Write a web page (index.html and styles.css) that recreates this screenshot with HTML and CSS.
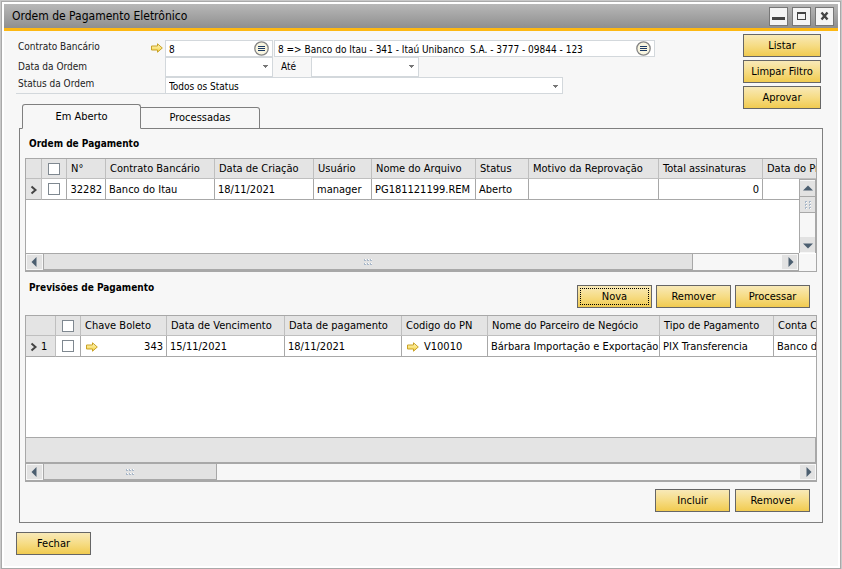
FILE: index.html
```html
<!DOCTYPE html>
<html lang="pt-BR">
<head>
<meta charset="utf-8">
<title>Ordem de Pagamento Eletrônico</title>
<link rel="stylesheet" href="styles.css">
</head>
<body>
<svg class="defs" aria-hidden="true">
  <defs>
    <linearGradient id="gold" x1="0" y1="0" x2="0" y2="1"><stop offset="0" stop-color="#fffbc8"/><stop offset="1" stop-color="#f5cf3c"/></linearGradient>
    <symbol id="arrow" viewBox="0 0 12 10"><path d="M.5 3h6V.8L11.3 5 6.500 9.200V7H.5z" fill="url(#gold)" stroke="#c9a227"/></symbol>
    <symbol id="picker" viewBox="0 0 15 15"><circle cx="7.500" cy="7.500" r="6.700" fill="#f8f5e0" stroke="#858585" stroke-width="1.300"/><path d="M4 5.500h7M4 7.500h7M4 9.500h7" stroke="#1d3b66"/></symbol>
    <symbol id="chevron" viewBox="0 0 8 10"><path d="M1.500 1.500 5.500 5l-4 3.500" fill="none" stroke="#444" stroke-width="2"/></symbol>
    <symbol id="tri" viewBox="0 0 10 10"><path d="M6.500 0v10L1.500 5z" fill="#4c5f70"/></symbol>
    <symbol id="grip" viewBox="0 0 8 6"><path d="M0 0h2v2H0zM3 0h2v2H3zM6 0h2v2H6zM0 4h2v2H0zM3 4h2v2H3zM6 4h2v2H6z" fill="#fff"/><path d="M0 0h1v2H0zM0 1h2v1H0zM3 0h1v2H3zM3 1h2v1H3zM6 0h1v2H6zM6 1h2v1H6zM0 4h1v2H0zM0 5h2v1H0zM3 4h1v2H3zM3 5h2v1H3zM6 4h1v2H6zM6 5h2v1H6z" fill="#a9b8c9"/></symbol>
  </defs>
</svg>
<main class="window">
  <header class="titlebar">
    <h1>Ordem de Pagamento Eletrônico</h1>
    <button class="winbtn" aria-label="Minimizar"><svg width="17" height="17"><path d="M2 9h13v3H2z" fill="#444"/></svg></button>
    <button class="winbtn" aria-label="Maximizar"><svg width="17" height="17"><path d="M4 4h9v8H4z M5 6v5h7V6z" fill="#444" fill-rule="evenodd"/></svg></button>
    <button class="winbtn" aria-label="Fechar janela"><svg width="17" height="17"><path d="M5.500 4.500l6 7M11.500 4.500l-6 7" stroke="#444" stroke-width="2.400"/></svg></button>
  </header>
  <div class="content">
    <section class="top">
      <form class="filters">
        <div class="labels">
          <label for="contract">Contrato Bancário</label>
          <svg class="link" width="12" height="10"><use href="#arrow"/></svg>
          <label for="date-from">Data da Ordem</label>
          <label for="status">Status da Ordem</label>
        </div>
        <div class="fields">
          <div class="line">
            <div class="field short"><input id="contract" value="8"><button type="button" class="pick" aria-label="Escolher contrato"><svg width="15" height="15"><use href="#picker"/></svg></button></div>
            <div class="field long"><input aria-label="Descrição do contrato" value="8 =&gt; Banco do Itau - 341 - Itaú Unibanco  S.A. - 3777 - 09844 - 123"><button type="button" class="pick" aria-label="Escolher conta"><svg width="15" height="15"><use href="#picker"/></svg></button></div>
          </div>
          <div class="line dates">
            <select id="date-from" class="short"><option></option></select>
            <label class="until" for="date-to">Até</label>
            <select id="date-to" class="short"><option></option></select>
          </div>
          <div class="line"><select id="status" class="status"><option>Todos os Status</option></select></div>
        </div>
      </form>
      <div class="actions">
        <button class="btn">Listar</button>
        <button class="btn">Limpar Filtro</button>
        <button class="btn">Aprovar</button>
      </div>
    </section>

    <nav class="tabs" role="tablist">
      <button class="tab active" role="tab" aria-selected="true">Em Aberto</button>
      <button class="tab" role="tab" aria-selected="false">Processadas</button>
    </nav>

    <section class="panel">
      <h2>Ordem de Pagamento</h2>
      <div class="grid orders">
        <div class="view">
          <table>
            <colgroup><col class="w16"><col class="w25"><col class="w39"><col class="w109"><col class="w99"><col class="w58"><col class="w104"><col class="w53"><col class="w130"><col class="w104"><col></colgroup>
            <thead><tr><th></th><th class="check"><input type="checkbox" aria-label="Selecionar todas as ordens"></th><th>N°</th><th>Contrato Bancário</th><th>Data de Criação</th><th>Usuário</th><th>Nome do Arquivo</th><th>Status</th><th>Motivo da Reprovação</th><th>Total assinaturas</th><th>Data do Pr</th></tr></thead>
            <tbody><tr><td class="rowhead"><svg width="8" height="10"><use href="#chevron"/></svg></td><td class="check"><input type="checkbox" aria-label="Selecionar ordem 32282"></td><td class="num">32282</td><td>Banco do Itau</td><td>18/11/2021</td><td>manager</td><td>PG181121199.REM</td><td>Aberto</td><td></td><td class="num">0</td><td></td></tr></tbody>
          </table>
          <div class="vbar">
            <button class="arrow up" aria-label="Rolar para cima"><svg width="10" height="10"><use href="#tri"/></svg></button>
            <div class="vthumb"><svg width="8" height="6"><use href="#grip"/></svg></div>
            <button class="arrow down" aria-label="Rolar para baixo"><svg width="10" height="10"><use href="#tri"/></svg></button>
          </div>
        </div>
        <div class="hbar">
          <button class="arrow" aria-label="Rolar para a esquerda"><svg width="10" height="10"><use href="#tri"/></svg></button>
          <div class="track"><div class="thumb wide"><svg width="8" height="6"><use href="#grip"/></svg></div></div>
          <button class="arrow right" aria-label="Rolar para a direita"><svg width="10" height="10"><use href="#tri"/></svg></button>
        </div>
      </div>

      <div class="sub">
        <h2>Previsões de Pagamento</h2>
        <div class="buttons close-set">
          <button class="btn focused">Nova</button>
          <button class="btn">Remover</button>
          <button class="btn">Processar</button>
        </div>
      </div>
      <div class="grid forecasts">
        <div class="view">
          <table>
            <colgroup><col class="w30"><col class="w25"><col class="w86"><col class="w118"><col class="w117"><col class="w86"><col class="w172"><col class="w114"><col></colgroup>
            <thead><tr><th></th><th class="check"><input type="checkbox" aria-label="Selecionar todas as previsões"></th><th>Chave Boleto</th><th>Data de Vencimento</th><th>Data de pagamento</th><th>Codigo do PN</th><th>Nome do Parceiro de Negócio</th><th>Tipo de Pagamento</th><th>Conta C</th></tr></thead>
            <tbody><tr><td class="rowhead"><div class="cell"><svg width="8" height="10"><use href="#chevron"/></svg>1</div></td><td class="check"><input type="checkbox" aria-label="Selecionar previsão 1"></td><td><div class="cell spread"><svg width="12" height="10"><use href="#arrow"/></svg>343</div></td><td>15/11/2021</td><td>18/11/2021</td><td><div class="cell linked"><svg width="12" height="10"><use href="#arrow"/></svg>V10010</div></td><td>Bárbara Importação e Exportação</td><td>PIX Transferencia</td><td>Banco d</td></tr></tbody>
          </table>
        </div>
        <div class="totals"></div>
        <div class="hbar">
          <button class="arrow" aria-label="Rolar para a esquerda"><svg width="10" height="10"><use href="#tri"/></svg></button>
          <div class="track"><div class="thumb"><svg width="8" height="6"><use href="#grip"/></svg></div></div>
          <button class="arrow right" aria-label="Rolar para a direita"><svg width="10" height="10"><use href="#tri"/></svg></button>
        </div>
      </div>
      <div class="buttons foot">
        <button class="btn">Incluir</button>
        <button class="btn">Remover</button>
      </div>
    </section>
    <button class="btn close">Fechar</button>
  </div>
</main>
</body>
</html>
```
FILE: styles.css
```css
* { box-sizing: border-box; }
body {
  margin: 0;
  padding: 1px;
  background: #c8c8c8;
  color: #000;
  font: 11px/14px "DejaVu Sans Condensed", "Noto Sans", sans-serif;
}
button, input, select { font: inherit; color: inherit; margin: 0; }
svg { display: block; flex: none; }
.defs { position: absolute; width: 0; height: 0; }
h1, h2 { margin: 0; }

.window {
  display: flex;
  flex-direction: column;
  min-height: calc(100vh - 1px);
  border: 1px solid #a9a9a9;
  outline: 2px solid #fff;
  outline-offset: -3px;
  padding: 2px;
  background: #f7f7f7;
}
.titlebar {
  display: flex;
  align-items: center;
  gap: 4px;
  height: 27px;
  padding: 0 4px 0 8px;
  background: linear-gradient(#b8b8b8, #8f8f8f);
  border-bottom: 3px solid #fdb813;
}
.titlebar h1 { flex: 1; font-size: 12px; font-weight: normal; }
.winbtn {
  width: 19px;
  height: 19px;
  padding: 0;
  border: 1px solid #777;
  background: #f4f4f4;
}
.content {
  flex: 1;
  display: flex;
  flex-direction: column;
  padding: 0 15px 11px;
}

.top { display: flex; justify-content: space-between; padding: 3px 2px 0 0; }
.filters { display: flex; flex: 1; font-size: 10px; padding-top: 6px; margin-left: -3px; }
.labels {
  display: grid;
  grid-template-columns: 1fr 12px;
  grid-template-rows: 20px 17px 17px;
  width: 149px;
  height: 54px;
  padding: 0 2px;
  border-bottom: 1px solid #d3d8dc;
  color: #222;
}
.labels label { grid-column: 1; }
.link { margin-top: 3px; }
.line { display: flex; }
.field { position: relative; margin-right: 1px; }
.field input, select {
  display: block;
  width: 100%;
  height: 17px;
  padding: 2px 3px 0;
  border: 1px solid #d3d8dc;
  border-radius: 0;
  background: #fff;
  outline: 0;
}
.short { width: 108px; }
.long { width: 381px; }
.pick {
  position: absolute;
  right: 4px;
  top: 1px;
  padding: 0;
  border: 0;
  background: none;
}
select {
  appearance: none;
  background:
    linear-gradient(#777, #777) right 4px top 7px / 5px 1px no-repeat,
    linear-gradient(#777, #777) right 5px top 8px / 3px 1px no-repeat,
    linear-gradient(#777, #777) right 6px top 9px / 1px 1px no-repeat,
    #fff;
}
select.short { width: 108px; height: 20px; }
select.status { width: 398px; }
.until { width: 38px; padding: 3px 0 0 8px; }
.actions { display: flex; flex-direction: column; gap: 3px; width: 78px; }

.btn {
  height: 23px;
  padding: 0;
  border: 1px solid #666;
  background: linear-gradient(#f8e9b8, #f6dc85 50%, #f1cb50);
}
.buttons { display: flex; gap: 5px; }
.close-set { gap: 4px; }
.buttons .btn { width: 75px; }
.focused { outline: 1px dotted #000; outline-offset: -4px; }
.close { width: 75px; align-self: flex-start; margin: 9px 0 0 -3px; }

.tabs { display: flex; align-items: flex-end; height: 25px; margin: -5px 0 -1px 3px; position: relative; }
.tab {
  width: 119px;
  height: 22px;
  border: 1px solid #7f7f7f;
  border-left-width: 0;
  border-radius: 0 3px 0 0;
  background: #f7f7f7;
  padding: 0;
}
.tab.active { height: 25px; border-left-width: 1px; border-radius: 3px 3px 0 0; border-bottom-color: #f7f7f7; }

.panel {
  flex: 1;
  display: flex;
  flex-direction: column;
  padding: 8px 5px 10px;
  border: 1px solid #7f7f7f;
}
h2 { padding-left: 4px; font-size: 10px; line-height: 14px; }
.grid {
  display: flex;
  flex-direction: column;
  border: 1px solid #a8a8a8;
  background: #fff;
  overflow: hidden;
}
.orders { flex: 114 0 114px; margin-top: 7px; }
.forecasts { flex: 167 0 167px; margin-top: 7px; }
.view { flex: 1; position: relative; overflow: hidden; }
table { width: 100%; table-layout: fixed; border-collapse: separate; border-spacing: 0; }
th, td {
  height: 20px;
  padding: 1px 3px 0;
  border-right: 1px solid #a8a8a8;
  border-bottom: 1px solid #a8a8a8;
  font-weight: normal;
  text-align: left;
  white-space: nowrap;
  overflow: hidden;
}
td { height: 21px; }
th { padding-left: 4px; background: #e4e4e4; border-color: #bfbfbf; }
th:last-child, td:last-child { padding-right: 0; border-right: 0; }
.rowhead { padding-left: 4px; background: #e4e4e4; border-right-color: #bfbfbf; }
.num { text-align: right; padding-left: 0; }
th.check, td.check { padding: 0 0 0 6px; }
.check input {
  appearance: none;
  display: block;
  width: 12px;
  height: 12px;
  border: 1px solid #7f8890;
  background: #fff;
}
.cell { display: flex; align-items: center; gap: 3px; }
.spread { justify-content: space-between; padding-left: 2px; }
.linked { gap: 5px; padding-left: 2px; }
.w16 { width: 16px; } .w25 { width: 25px; } .w30 { width: 30px; } .w39 { width: 39px; }
.w53 { width: 53px; } .w58 { width: 58px; } .w86 { width: 86px; } .w99 { width: 99px; }
.w104 { width: 104px; } .w109 { width: 109px; } .w114 { width: 114px; } .w117 { width: 117px; }
.w118 { width: 118px; } .w130 { width: 130px; } .w172 { width: 172px; }

.hbar {
  display: flex;
  height: 18px;
  padding: 1px;
  border-top: 1px solid #a8a8a8;
  border-bottom: 1px solid #a8a8a8;
  background: #f7f7f7;
}
.orders .hbar { margin-right: 17px; border-right: 1px solid #a8a8a8; }
.orders { background: linear-gradient(#f7f7f7, #f7f7f7) right bottom / 17px 17px no-repeat, #fff; }
.arrow {
  display: flex;
  align-items: center;
  justify-content: center;
  width: 15px;
  padding: 0;
  border: 0;
  background: #e2e2e2;
}
.right svg { transform: rotate(180deg); }
.up svg { transform: rotate(90deg); }
.down svg { transform: rotate(-90deg); }
.track { flex: 1; margin: -1px 0 -1px 1px; }
.thumb {
  display: flex;
  align-items: center;
  justify-content: center;
  width: 23%;
  height: 100%;
  border: 1px solid #a8a8a8;
  border-top: 0;
  background: #e2e2e2;
}
.wide { width: 88%; }
.vbar {
  position: absolute;
  top: 20px;
  right: 0;
  bottom: 0;
  display: flex;
  flex-direction: column;
  width: 17px;
  padding: 1px 0;
  border: 1px solid #a8a8a8;
  border-bottom: 0;
  background: #f7f7f7;
}
.vbar .arrow { height: 15px; }
.vthumb {
  display: flex;
  align-items: center;
  justify-content: center;
  height: 17px;
  border: solid #a8a8a8;
  border-width: 1px 0;
  background: #e2e2e2;
}
.vthumb svg { transform: rotate(90deg); }
.down { margin-top: auto; }
.totals { height: 26px; border: 1px solid #a8a8a8; border-left: 0; background: #e4e4e4; }
.sub { display: flex; justify-content: space-between; padding: 13px 7px 0 0; }
.sub h2 { padding-top: 0; margin-top: -4px; }
.foot { justify-content: flex-end; padding: 7px 7px 0 0; }
```
